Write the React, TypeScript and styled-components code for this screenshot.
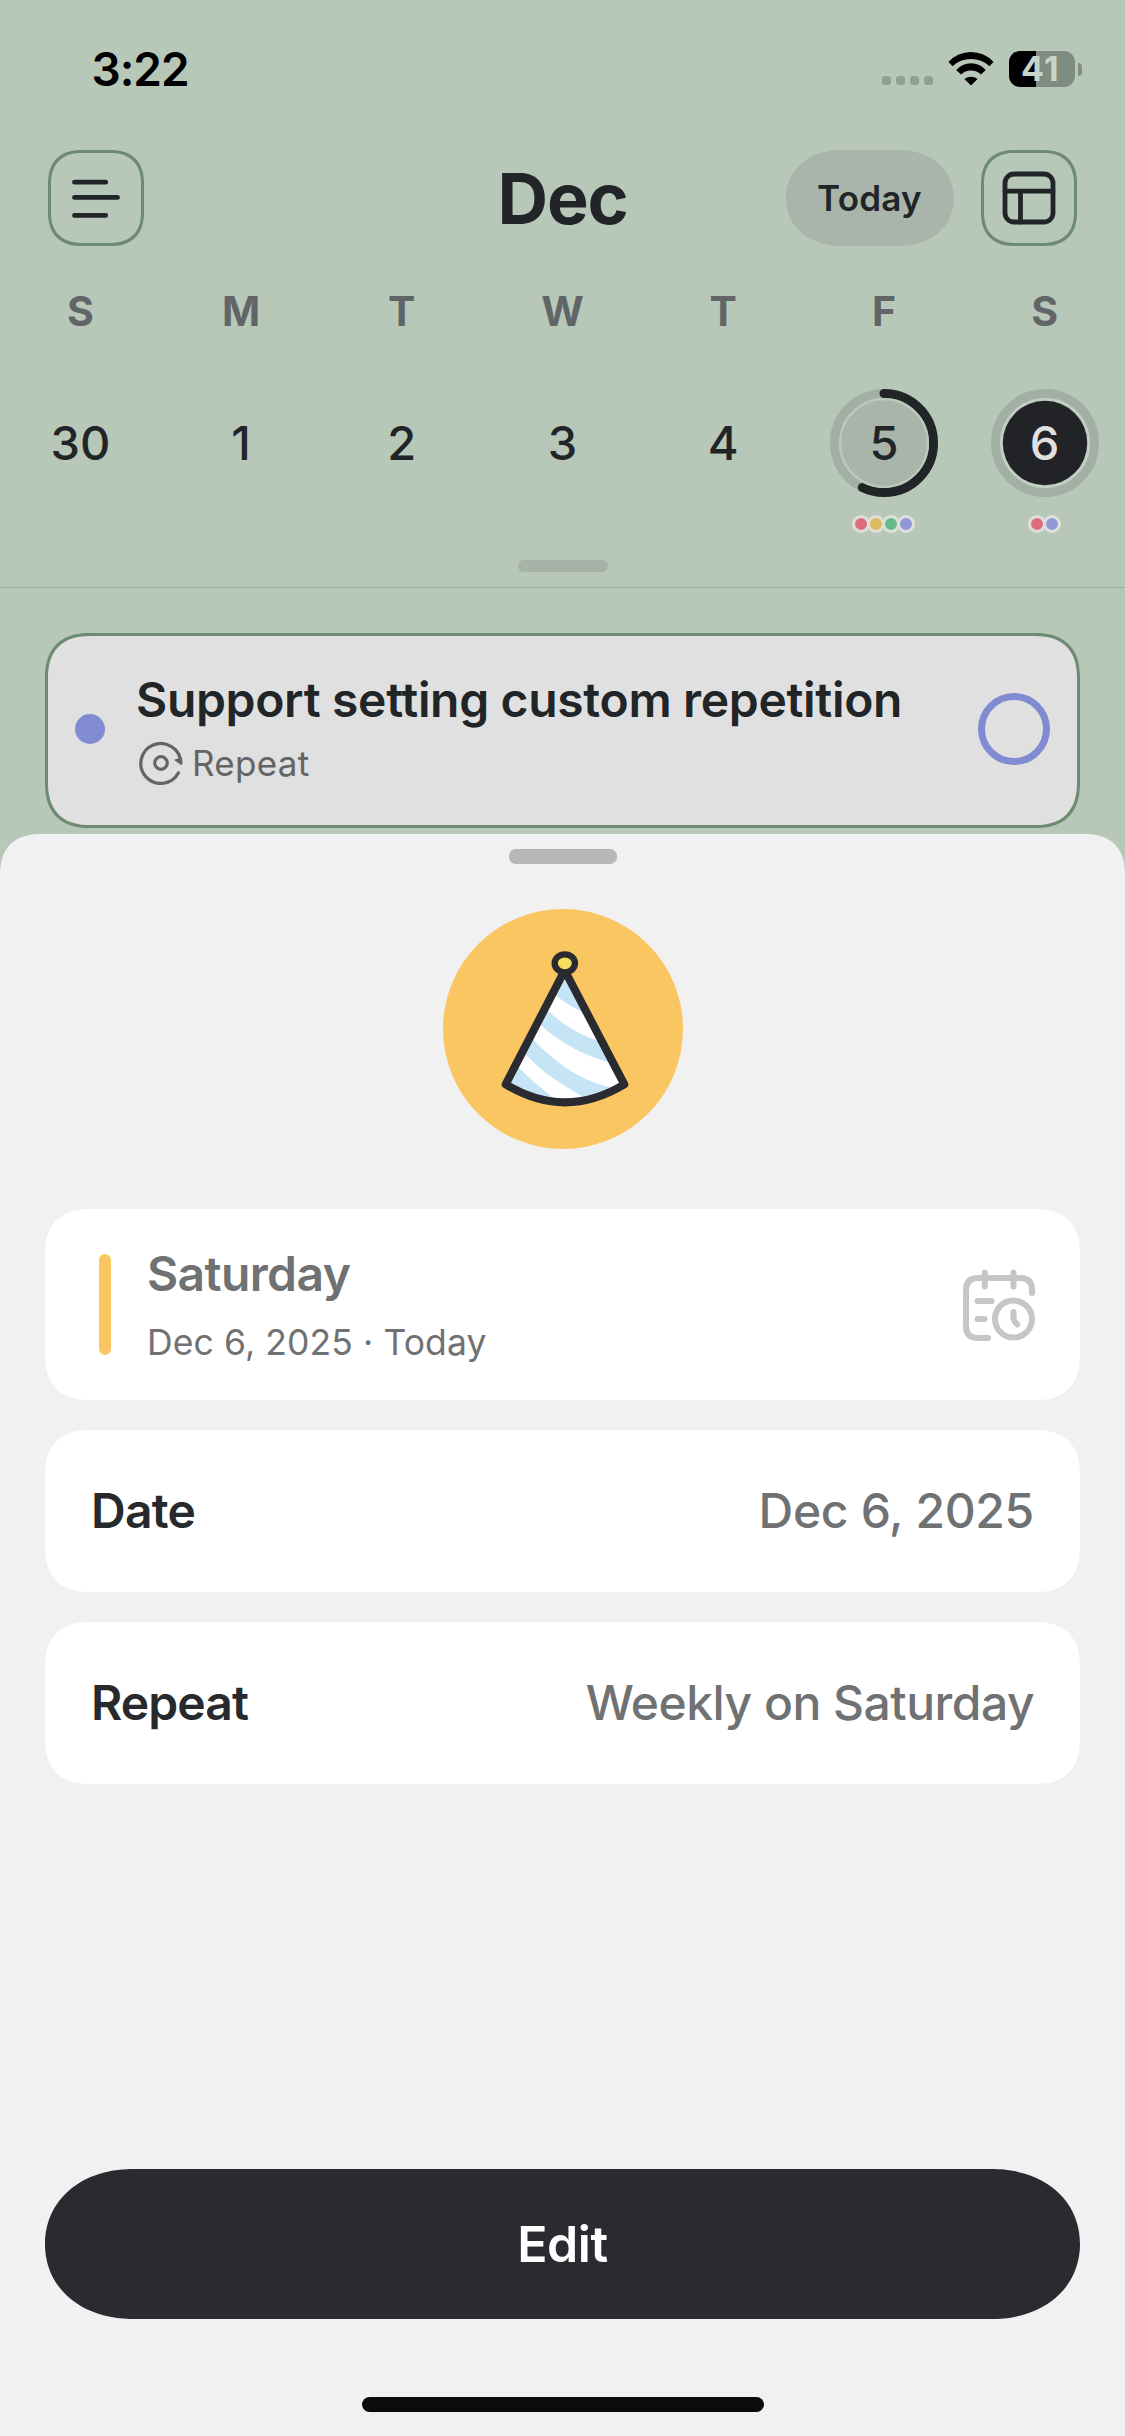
import React from "react";
import styled, { createGlobalStyle } from "styled-components";

const ink = "#222527";
const sage = "#b7c7b8";
const moss = "#6c8b70";
const periwinkle = "#808bd2";
const grey = "#6f7173";
const amber = "#fac661";

const GlobalStyle = createGlobalStyle`
  *, *::before, *::after { box-sizing: border-box; }
  body { margin: 0; background: ${sage}; }
  button { border: 0; padding: 0; background: none; font: inherit; }
`;

const Screen = styled.main`
  width: 1125px;
  height: 2436px;
  display: flex;
  flex-direction: column;
  overflow: hidden;
  background: ${sage};
  color: ${ink};
  font-family: Inter, "Noto Sans", sans-serif;
`;

/* Status bar */

const StatusBar = styled.header`
  height: 138px;
  padding: 0 43px 0 91.5px;
  display: flex;
  align-items: center;
  justify-content: space-between;
  color: #000;
`;

const Clock = styled.time`
  font-size: 46px;
  line-height: 56px;
  font-weight: 600;
  letter-spacing: -1.03px;
`;

const StatusIcons = styled.div`
  display: flex;
  align-items: center;
`;

const CellularDots = styled.div`
  display: flex;
  gap: 5px;
  margin: 23px 15px 0 0;
`;

const CellularDot = styled.span`
  width: 9px;
  height: 9px;
  border-radius: 3px;
  background: #91a094;
`;

const WifiIcon = styled.svg`
  width: 46px;
  height: 36px;
  margin-right: 15px;
`;

const Battery = styled.div`
  width: 66px;
  height: 36px;
  padding-right: 3px;
  border-radius: 11px;
  background: linear-gradient(90deg, #000 0 27px, #7f8c81 27px);
  display: flex;
  align-items: center;
  justify-content: center;
  font-size: 34px;
  line-height: 36px;
  font-weight: 700;
  letter-spacing: 1.2px;
  color: #c6d5c8;
`;

const BatteryTip = styled.span`
  width: 4px;
  height: 13px;
  margin-left: 3px;
  border-radius: 0 5px 5px 0;
  background: #829084;
`;

/* Navigation */

const NavBar = styled.nav`
  height: 120px;
  padding: 0 48px;
  display: grid;
  grid-template-columns: 1fr auto 1fr;
  align-items: center;
`;

const MonthTitle = styled.h1`
  margin: 0;
  padding-top: 1px;
  font-size: 70px;
  line-height: 86px;
  font-weight: 700;
  letter-spacing: -1.13px;
`;

const NavActions = styled.div`
  display: flex;
  justify-content: flex-end;
  gap: 27px;
`;

const SquareButton = styled.button`
  width: 96px;
  height: 96px;
  display: flex;
  align-items: center;
  justify-content: center;
  border: 3px solid ${moss};
  border-radius: 34px;
  corner-shape: superellipse(1.25);
`;

const NavIcon = styled.svg`
  width: 90px;
  height: 90px;
  fill: none;
  stroke: ${ink};
  stroke-width: 4.8;
  stroke-linecap: round;
`;

const TodayButton = styled.button`
  width: 168px;
  height: 96px;
  padding-right: 1px;
  border-radius: 55px / 48px;
  corner-shape: superellipse(1.08);
  background: #a9b5ab;
  color: ${ink};
  font-size: 35px;
  font-weight: 600;
  letter-spacing: 0.24px;
`;

/* Week strip */

const Weekdays = styled.div`
  height: 106px;
  display: grid;
  grid-template-columns: repeat(7, 1fr);
  align-items: center;
  text-align: center;
  font-size: 41px;
  line-height: 50px;
  font-weight: 700;
  color: #626567;
`;

const Week = styled.div`
  height: 169px;
  padding-top: 25px;
  display: grid;
  grid-template-columns: repeat(7, 1fr);
`;

const Day = styled.div`
  display: flex;
  flex-direction: column;
  align-items: center;
  gap: 18px;
`;

const DayFace = styled.div`
  width: 108px;
  height: 108px;
  display: grid;
  place-items: center;

  > * { grid-area: 1 / 1; }
`;

const DayNumber = styled.span<{ $light?: boolean }>`
  font-size: 47px;
  line-height: 56px;
  font-weight: 500;
  color: ${(p) => (p.$light ? "#e0e0e0" : ink)};
`;

const Ring = styled.svg`
  width: 108px;
  height: 108px;
  fill: none;
`;

const TaskDots = styled.div`
  display: flex;
  padding-left: 3px;
`;

const TaskDot = styled.span<{ $color: string }>`
  width: 18px;
  height: 18px;
  margin-left: -3px;
  border: 3px solid #dfdfdb;
  border-radius: 50%;
  background: ${(p) => p.$color};
`;

const StripHandle = styled.div`
  width: 90px;
  height: 12px;
  margin: 27px auto 15px;
  border-radius: 6px;
  background: #a6b3a8;
`;

const Divider = styled.div`
  height: 1px;
  background: #99a89c;
`;

/* Task */

const TaskList = styled.section`
  height: 246px;
  padding: 45px 45px 0;
`;

const TaskCard = styled.article`
  height: 195px;
  padding: 0 27px 3px;
  display: flex;
  align-items: center;
  border: 3px solid ${moss};
  border-radius: 46px;
  corner-shape: superellipse(1.3);
  background: #e0e0e0;
`;

const TaskBullet = styled.span`
  width: 30px;
  height: 30px;
  border-radius: 50%;
  background: ${periwinkle};
`;

const TaskText = styled.div`
  flex: 1;
  margin-left: 31px;
  padding-top: 3px;
`;

const TaskTitle = styled.h2`
  margin: 0;
  font-size: 48px;
  line-height: 64px;
  font-weight: 600;
  letter-spacing: -0.33px;
`;

const TaskMeta = styled.div`
  display: flex;
  align-items: center;
  height: 62px;
  font-size: 35px;
  letter-spacing: 0.3px;
  color: #646464;
`;

const RepeatIcon = styled.svg`
  width: 44px;
  height: 44px;
  margin: 0 9px 0 3px;
  fill: none;
  stroke: #646464;
  stroke-width: 3.2;
  stroke-linecap: round;
  stroke-linejoin: round;
`;

const TaskCheck = styled.button`
  width: 72px;
  height: 72px;
  border: 7px solid ${periwinkle};
  border-radius: 50%;
`;

/* Bottom sheet */

const Sheet = styled.section`
  flex: 1;
  display: flex;
  flex-direction: column;
  align-items: center;
  padding: 15px 45px 24px;
  border-radius: 42px 42px 0 0;
  corner-shape: superellipse(1.3);
  background: #f1f1f1;
`;

const SheetHandle = styled.div`
  width: 108px;
  height: 15px;
  border-radius: 7px;
  background: #b7b7b9;
`;

const PartyHat = styled.svg`
  width: 240px;
  height: 240px;
  margin: 45px 0 60px;
`;

const Cards = styled.div`
  align-self: stretch;
  display: flex;
  flex-direction: column;
  gap: 30px;
`;

const Card = styled.div<{ $tall?: boolean }>`
  height: ${(p) => (p.$tall ? 191 : 162)}px;
  padding: ${(p) => (p.$tall ? "0 45px 0 54px" : "0 46px 0 46px")};
  display: flex;
  align-items: center;
  justify-content: space-between;
  border-radius: 46px;
  corner-shape: superellipse(1.3);
  background: #fff;
`;

const AccentBar = styled.span`
  width: 12px;
  height: 101px;
  border-radius: 6px;
  background: ${amber};
`;

const DayInfo = styled.div`
  flex: 1;
  margin-left: 36px;
  padding-top: 8px;
`;

const DayName = styled.div`
  font-size: 48px;
  line-height: 68px;
  font-weight: 600;
  letter-spacing: -0.6px;
  color: ${grey};
`;

const DayDate = styled.div`
  font-size: 35.5px;
  line-height: 69px;
  letter-spacing: 0.1px;
  color: ${grey};
`;

const CalendarIcon = styled.svg`
  width: 72px;
  height: 72px;
  fill: none;
  stroke: #c6c6c6;
  stroke-width: 6;
  stroke-linecap: round;
  stroke-linejoin: round;
`;

const FieldLabel = styled.span<{ $tracking: number }>`
  font-size: 48px;
  line-height: 58px;
  font-weight: 600;
  letter-spacing: ${(p) => p.$tracking}px;
  color: #28292d;
`;

const FieldValue = styled.span<{ $tracking: number }>`
  font-size: 48px;
  line-height: 58px;
  font-weight: 500;
  letter-spacing: ${(p) => p.$tracking}px;
  color: ${grey};
`;

const EditButton = styled.button`
  align-self: stretch;
  height: 150px;
  margin-top: auto;
  border-radius: 88px / 75px;
  corner-shape: superellipse(1.08);
  background: #2a2b30;
  color: #fff;
  font-size: 50px;
  font-weight: 600;
  letter-spacing: -0.4px;
`;

const HomeIndicator = styled.div`
  width: 402px;
  height: 15px;
  margin-top: 78px;
  border-radius: 8px;
  background: #0b0b0b;
`;

const RING_RADIUS = 49.5;
const RING_LENGTH = 2 * Math.PI * RING_RADIUS;

type DayData = {
  number: number;
  progress?: number;
  selected?: boolean;
  dots?: string[];
};

const red = "#dd6c7e";
const yellow = "#e0ba60";
const green = "#67ba88";
const blue = "#8f99d5";

const week: DayData[] = [
  { number: 30 },
  { number: 1 },
  { number: 2 },
  { number: 3 },
  { number: 4 },
  { number: 5, progress: 4 / 7, dots: [red, yellow, green, blue] },
  { number: 6, progress: 0, selected: true, dots: [red, blue] },
];

function DayRing({ progress, selected }: { progress: number; selected?: boolean }) {
  return (
    <Ring viewBox="0 0 108 108">
      <circle cx="54" cy="54" r={RING_RADIUS} stroke="#a2afa4" strokeWidth="9" />
      {progress > 0 && (
        <circle
          cx="54"
          cy="54"
          r={RING_RADIUS}
          stroke={ink}
          strokeWidth="9"
          strokeLinecap="round"
          strokeDasharray={`${progress * RING_LENGTH} ${RING_LENGTH}`}
          transform="rotate(-90 54 54)"
        />
      )}
      <circle cx="54" cy="54" r="43.8" stroke={selected ? "#c3cfc4" : "#b9c9bb"} strokeWidth="2.4" />
      <circle cx="54" cy="54" r={selected ? 42.2 : 42.8} fill={selected ? "#222327" : "#a9b5ab"} />
    </Ring>
  );
}

function Wifi() {
  return (
    <WifiIcon viewBox="0 0 46 36">
      <path d="M.5 11A30.3 30.3 0 0 1 45.5 11L41.5 15.3A27 27 0 0 0 4.5 15.3Z" />
      <path d="M8.2 19A19.5 19.5 0 0 1 37.8 19L33 23.6A14.5 14.5 0 0 0 13 23.6Z" />
      <path d="M16.4 28A10.5 10.5 0 0 1 29.6 28L23 34.6Z" />
    </WifiIcon>
  );
}

function HatBadge() {
  return (
    <PartyHat viewBox="68 57 720 720">
      <defs>
        <clipPath id="cone">
          <path d="M433 243L255 585Q433 693 613 585Z" />
        </clipPath>
      </defs>
      <circle cx="428" cy="417" r="360" fill={amber} />
      <g clipPath="url(#cone)">
        <rect x="240" y="230" width="390" height="430" fill="#c5e5f7" />
        <g fill="#fff">
          <path d="M392 304Q446 353 510 376L552 458Q450 432 366 346Z" />
          <path d="M348 393Q400 444 464 477T592 524L640 606Q540 592 470 554T326 436Z" />
          <path d="M300 474Q350 535 410 573T516 636L420 640Q350 588 280 518Z" />
        </g>
      </g>
      <path
        d="M433 241L256 583Q433 691 612 583Z"
        fill="none"
        stroke="#2a2b31"
        strokeWidth="24"
        strokeLinejoin="round"
      />
      <ellipse cx="433.5" cy="220" rx="30.5" ry="27" fill="#f4dc5c" stroke="#2a2b31" strokeWidth="19" />
    </PartyHat>
  );
}

export default function App() {
  return (
    <Screen>
      <GlobalStyle />
      <StatusBar>
        <Clock>3:22</Clock>
        <StatusIcons>
          <CellularDots>
            <CellularDot />
            <CellularDot />
            <CellularDot />
            <CellularDot />
          </CellularDots>
          <Wifi />
          <Battery>41</Battery>
          <BatteryTip />
        </StatusIcons>
      </StatusBar>

      <NavBar>
        <SquareButton aria-label="Menu">
          <NavIcon viewBox="51 153 90 90">
            <path d="M74.5 182.2H105.7M74.5 197.4H117.5M74.5 215.4H105.7" />
          </NavIcon>
        </SquareButton>
        <MonthTitle>Dec</MonthTitle>
        <NavActions>
          <TodayButton>Today</TodayButton>
          <SquareButton aria-label="Layout">
            <NavIcon viewBox="984 153 90 90">
              <rect x="1005" y="174" width="48" height="48" rx="9" />
              <path d="M1005 191.2H1053M1020.5 191.2V222" />
            </NavIcon>
          </SquareButton>
        </NavActions>
      </NavBar>

      <Weekdays>
        {["S", "M", "T", "W", "T", "F", "S"].map((label, i) => (
          <span key={i}>{label}</span>
        ))}
      </Weekdays>
      <Week>
        {week.map((day) => (
          <Day key={day.number}>
            <DayFace>
              {day.progress !== undefined && <DayRing progress={day.progress} selected={day.selected} />}
              <DayNumber $light={day.selected}>{day.number}</DayNumber>
            </DayFace>
            {day.dots && (
              <TaskDots>
                {day.dots.map((color) => (
                  <TaskDot key={color} $color={color} />
                ))}
              </TaskDots>
            )}
          </Day>
        ))}
      </Week>
      <StripHandle />
      <Divider />

      <TaskList>
        <TaskCard>
          <TaskBullet />
          <TaskText>
            <TaskTitle>Support setting custom repetition</TaskTitle>
            <TaskMeta>
              <RepeatIcon viewBox="0 0 44 44">
                <path d="M39.5 31.8A20 20 0 1 1 41.8 21.5" />
                <path d="M36.5 19L42.3 17.5V23Z" fill="#646464" strokeWidth="1.8" />
                <circle cx="22" cy="22" r="6.3" />
              </RepeatIcon>
              Repeat
            </TaskMeta>
          </TaskText>
          <TaskCheck aria-label="Complete" />
        </TaskCard>
      </TaskList>

      <Sheet>
        <SheetHandle />
        <HatBadge />
        <Cards>
          <Card $tall>
            <AccentBar />
            <DayInfo>
              <DayName>Saturday</DayName>
              <DayDate>Dec 6, 2025 · Today</DayDate>
            </DayInfo>
            <CalendarIcon viewBox="0 0 72 72">
              <path d="M25 69H15Q3 69 3 57V21Q3 9 15 9H57Q69 9 69 21V24" />
              <path d="M21.8 3.5V17.5M50.5 3.5V17.5M14.5 32H28.5M14.5 50H21.5" />
              <circle cx="50.5" cy="50" r="18.5" />
              <path d="M50.5 43V50Q51 52 54.2 55.5" />
            </CalendarIcon>
          </Card>
          <Card>
            <FieldLabel $tracking={-0.73}>Date</FieldLabel>
            <FieldValue $tracking={-0.3}>Dec 6, 2025</FieldValue>
          </Card>
          <Card>
            <FieldLabel $tracking={-0.9}>Repeat</FieldLabel>
            <FieldValue $tracking={-0.5}>Weekly on Saturday</FieldValue>
          </Card>
        </Cards>
        <EditButton>Edit</EditButton>
        <HomeIndicator />
      </Sheet>
    </Screen>
  );
}
